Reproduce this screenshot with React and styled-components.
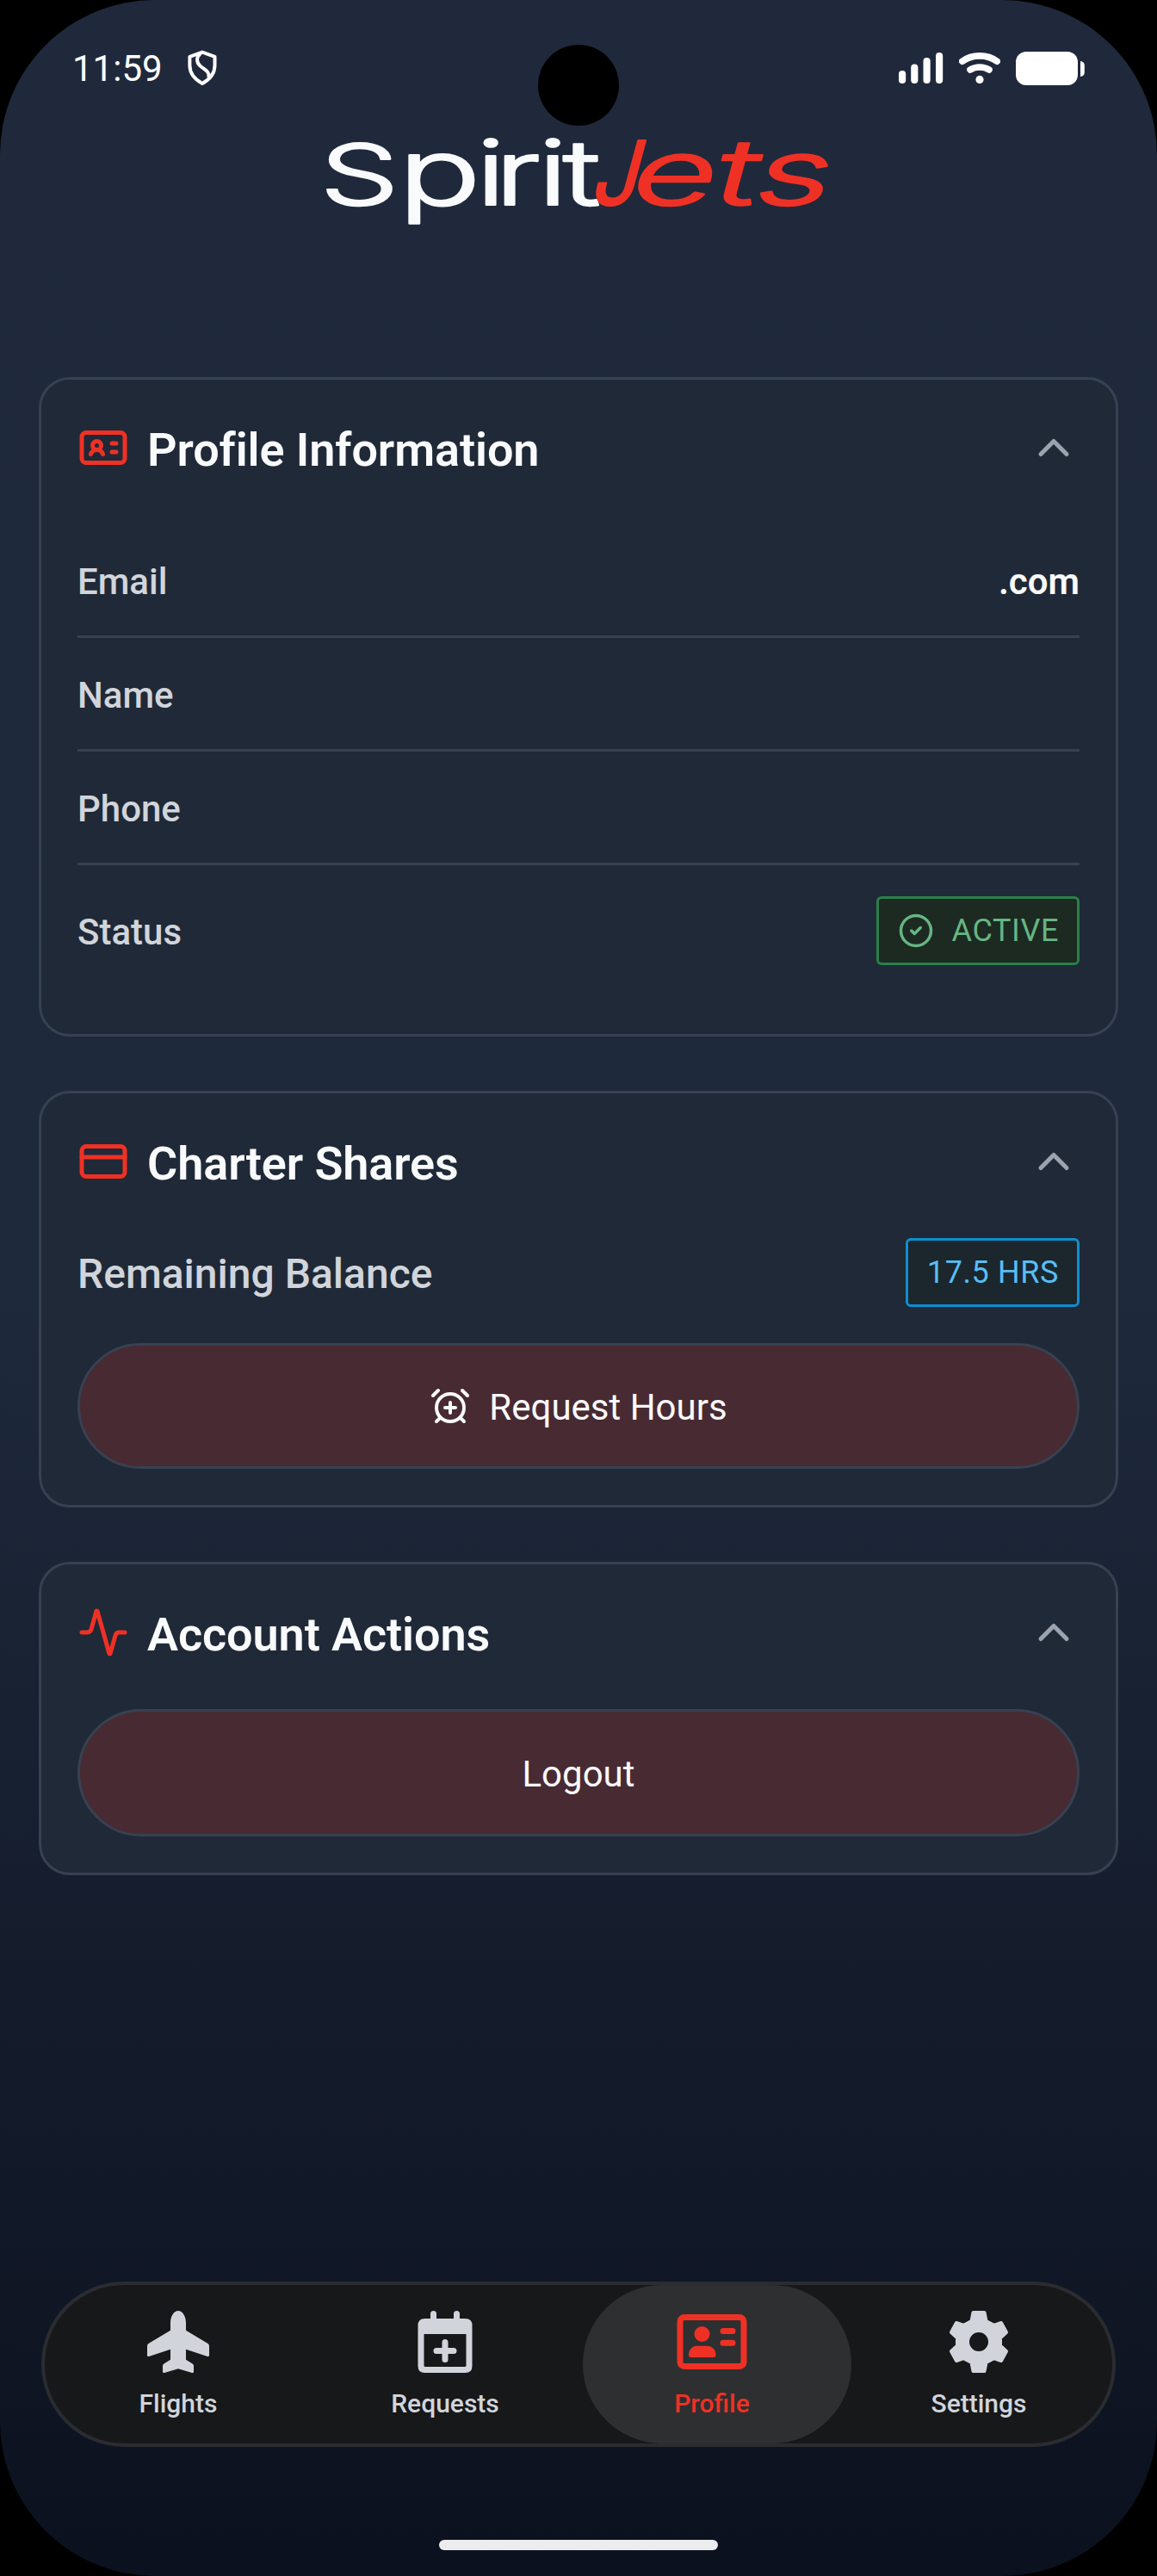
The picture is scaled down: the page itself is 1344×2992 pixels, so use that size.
import React, { useState } from 'react'
import styled, { createGlobalStyle } from 'styled-components'
import { Activity, AlarmClockPlus, ChevronDown, ChevronUp, CircleCheck, CreditCard, IdCard } from 'lucide-react'

const GlobalStyle = createGlobalStyle`
  *{
    box-sizing: border-box;
    padding: 0;
    margin: 0;
  }
  body{
    background: #000;
    font-family: Roboto, sans-serif;
  }
`

const rows = [
  { label: 'Email', value: '.com' },
  { label: 'Name', value: '' },
  { label: 'Phone', value: '' },
]

const ShieldIcon = () => (
  <svg width="34" height="42" viewBox="0 0 34 42" fill="none" stroke="#fff" strokeWidth="4" strokeLinejoin="round" strokeLinecap="round">
    <path d="M17 2.600 L31.500 7.800 V18 C31.500 28 26 34 17 39 C8 34 2.400 28 2.400 18 V7.800 Z" />
    <path d="M14.500 4.500 C10 8.500 10 14 14 18 C18 22.500 25.500 24 24.500 31" />
  </svg>
)

const SignalIcon = () => (
  <svg width="52" height="36" viewBox="0 0 52 36" fill="#fff">
    <rect x="0" y="21" width="8.200" height="15" rx="4" />
    <rect x="14.200" y="13.500" width="8.200" height="22.500" rx="4" />
    <rect x="28.500" y="6" width="8.200" height="30" rx="4" />
    <rect x="43" y="0" width="8.200" height="36" rx="4" />
  </svg>
)

const WifiIcon = () => (
  <svg width="48" height="36" viewBox="0 0 48 36" fill="none" stroke="#fff" strokeWidth="7.600" strokeLinecap="round">
    <path d="M3.800 10.300 C15 1.700 33 1.700 44.200 10.300" />
    <path d="M13 20 C19.500 16 28.500 16 35 20" />
    <circle cx="24" cy="31.400" r="4.600" fill="#fff" stroke="none" />
  </svg>
)

const BatteryIcon = () => (
  <svg width="80" height="39" viewBox="0 0 80 39" fill="#fff">
    <rect width="72" height="39" rx="12" />
    <path d="M75 11 C78 11.500 79.800 13 79.800 16 V24 C79.800 27 78 28.500 75 29 Z" />
  </svg>
)

const FlightIcon = () => (
  <svg width="72" height="72" viewBox="0 0 72 72" fill="currentColor">
    <path d="M36 0 C41.500 0 45 7 45 14 V22.700 L70.500 38 Q72 39 72 41 V51.500 Q72 53.500 70 52.900 L45 44.700 V56.700 L53 61.800 Q54 62.500 54 64 V70.500 Q54 72.500 52 71.900 L36 67.300 L20 71.900 Q18 72.500 18 70.500 V64 Q18 62.500 19 61.800 L27 56.700 V44.700 L2 52.900 Q0 53.500 0 51.500 V41 Q0 39 1.500 38 L27 22.700 V14 C27 7 30.500 0 36 0 Z" />
  </svg>
)

const RequestIcon = () => (
  <svg width="72" height="72" viewBox="0 0 72 72" fill="currentColor">
    <rect x="19" y="0" width="7" height="18" rx="3.500" />
    <rect x="46" y="0" width="7" height="18" rx="3.500" />
    <path fillRule="evenodd" d="M12.500 9 H59.500 Q67.500 9 67.500 17 V64 Q67.500 72 59.500 72 H12.500 Q4.500 72 4.500 64 V17 Q4.500 9 12.500 9 Z M11.500 27 V63.500 Q11.500 65 13 65 H59 Q60.500 65 60.500 63.500 V27 Z" />
    <path d="M36 36.500 V56.500 M26 46.400 H46" fill="none" stroke="currentColor" strokeWidth="7" strokeLinecap="round" />
  </svg>
)

const ProfileIcon = () => (
  <svg width="82" height="72" viewBox="0 0 82 72" fill="currentColor">
    <rect x="4" y="7.500" width="74" height="57" rx="5" fill="none" stroke="currentColor" strokeWidth="7" />
    <circle cx="29.500" cy="27" r="9" />
    <path d="M14 51 C14 45 18 40.700 24 40.700 H35 C41 40.700 45.500 45 45.500 51 Q45.500 54 43 54 H16.500 Q14 54 14 51 Z" />
    <path d="M54 23.500 H65 M54 37.300 H65" fill="none" stroke="currentColor" strokeWidth="7" strokeLinecap="round" />
  </svg>
)

const SettingsIcon = () => (
  <svg width="72" height="72" viewBox="-36 -36 72 72">
    <path
      fill="currentColor"
      stroke="currentColor"
      strokeWidth="4"
      strokeLinejoin="round"
      fillRule="evenodd"
      d="M-6.500 -34 H6.500 L8.500 -24 L17.500 -19.200 L26 -22 L32 -11 L25 -4.500 V4.500 L32 11 L26 22 L17.500 19.200 L8.500 24 L6.500 34 H-6.500 L-8.500 24 L-17.500 19.200 L-26 22 L-32 11 L-25 4.500 V-4.500 L-32 -11 L-26 -22 L-17.500 -19.200 L-8.500 -24 Z M0 -13 A13 13 0 1 0 0 13 A13 13 0 1 0 0 -13 Z"
    />
  </svg>
)

const tabs = [
  { name: 'Flights', Icon: FlightIcon },
  { name: 'Requests', Icon: RequestIcon },
  { name: 'Profile', Icon: ProfileIcon },
  { name: 'Settings', Icon: SettingsIcon },
]

const Wordmark = () => (
  <Logo viewBox="352 120 640 156" aria-label="SpiritJets">
    <g fill="#f8fafc" stroke="#f8fafc">
      <text transform="translate(0 238) scale(1.5 1)" x="247.700 308.500" y="0" fontSize="106">
        <tspan fontSize="97">S</tspan>p
      </text>
      <text transform="translate(0 238) scale(1.4 1)" x="395 410.700 446.400 467" y="0" fontSize="105">irit</text>
    </g>
    <g fill="#ef3125" stroke="#ef3125">
      <text transform="translate(684 238) skewX(-15.2) scale(0.92 1)" fontSize="103" fontWeight="400">J</text>
      <text transform="translate(0 238) skewX(-15.2) scale(1.6 1)" x="454.400 515 544.500" y="0" fontSize="106">ets</text>
    </g>
  </Logo>
)

const Section = ({ icon: Icon, title, children }) => {
  const [open, setOpen] = useState(true)

  return (
    <Card>
      <CardHeader onClick={() => setOpen(!open)}>
        <Icon size={60} color="#ef3125" />
        <h2>{title}</h2>
        {open ? <ChevronUp size={60} color="#9ca3af" /> : <ChevronDown size={60} color="#9ca3af" />}
      </CardHeader>
      {open && children}
    </Card>
  )
}

const App = () => {
  const [active, setActive] = useState('Profile')

  return (
    <Screen>
      <GlobalStyle />
      <Camera />
      <StatusBar>
        <Time>11:59</Time>
        <ShieldIcon />
        <StatusIcons>
          <SignalIcon />
          <WifiIcon />
          <BatteryIcon />
        </StatusIcons>
      </StatusBar>
      <Wordmark />

      <Content>
        <Section icon={IdCard} title="Profile Information">
          {rows.map((row) =>
            <Row key={row.label}>
              <Label>{row.label}</Label>
              <Value>{row.value}</Value>
            </Row>
          )}
          <Row $last>
            <Label>Status</Label>
            <Badge $bg="#1c2a22" $border="#2a8049" $color="#66b584">
              <CircleCheck size={42} />
              ACTIVE
            </Badge>
          </Row>
        </Section>

        <Section icon={CreditCard} title="Charter Shares">
          <Balance>
            <Label $large>Remaining Balance</Label>
            <Badge $bg="#1b272d" $border="#0d8fd2" $color="#57bef6">17.5 HRS</Badge>
          </Balance>
          <ActionButton $height={146}>
            <AlarmClockPlus size={48} />
            <span>Request Hours</span>
          </ActionButton>
        </Section>

        <Section icon={Activity} title="Account Actions">
          <ActionButton $height={148}>
            <span>Logout</span>
          </ActionButton>
        </Section>
      </Content>

      <TabBar>
        {tabs.map(({ name, Icon }) =>
          <Tab key={name} $active={name === active} onClick={() => setActive(name)}>
            <Icon />
            <span>{name}</span>
          </Tab>
        )}
      </TabBar>
      <HomeIndicator />
    </Screen>
  )
}

const Screen = styled.div`
  position: relative;
  width: 1344px;
  height: 2992px;
  display: flex;
  flex-direction: column;
  overflow: hidden;
  border-radius: 180px;
  background: linear-gradient(180deg, #1f293b 0%, #1e293b 50%, #111827 86%, #0b111e 100%);
`

const Camera = styled.div`
  position: absolute;
  top: 52px;
  left: 625px;
  width: 94px;
  height: 94px;
  border-radius: 50%;
  background: #000;
`

const StatusBar = styled.div`
  display: flex;
  align-items: center;
  height: 120px;
  padding: 38px 84px 0 84px;
  color: #fff;

  > svg{
    margin: 0 0 0 29px;
  }
`

const Time = styled.span`
  font-size: 42px;
`

const StatusIcons = styled.div`
  display: flex;
  align-items: center;
  gap: 18px;
  margin-left: auto;
`

const Logo = styled.svg`
  flex: none;
  width: 640px;
  height: 156px;
  margin: 0 auto;
  overflow: visible;
  font-family: Inter, sans-serif;
  font-weight: 300;
  stroke-width: 2.2px;
  stroke-linejoin: round;
`

const Content = styled.main`
  display: flex;
  flex-direction: column;
  gap: 63px;
  padding: 162px 45px 0;
`

const Card = styled.section`
  padding: 42px;
  border: 3px solid #374151;
  border-radius: 36px;
  background: #202937;
`

const CardHeader = styled.header`
  display: flex;
  align-items: center;
  height: 74px;
  margin-bottom: 52px;
  cursor: pointer;

  h2{
    flex: 1;
    padding: 4px 0 0 21px;
    font-size: 54px;
    font-weight: 600;
    letter-spacing: -0.1px;
    color: #f9fafb;
  }
`

const Row = styled.div`
  display: flex;
  align-items: center;
  justify-content: space-between;
  height: ${props => props.$last ? '152px' : '132px'};
  margin-bottom: ${props => props.$last ? '2px' : '0'};
  border-bottom: ${props => props.$last ? 'none' : '3px solid #374151'};
`

const Label = styled.span`
  padding-top: 3px;
  font-size: ${props => props.$large ? '48px' : '42px'};
  font-weight: 500;
  color: #d1d5db;
`

const Value = styled.span`
  padding-top: 3px;
  font-size: 42px;
  font-weight: 600;
  color: #f9fafb;
`

const Badge = styled.div`
  display: flex;
  align-items: center;
  gap: 21px;
  height: 80px;
  padding: 0 21px 0 22px;
  border: 3px solid ${props => props.$border};
  border-radius: 6px;
  background: ${props => props.$bg};
  color: ${props => props.$color};
  font-size: 36px;
  letter-spacing: 0.6px;
`

const Balance = styled.div`
  display: flex;
  align-items: center;
  justify-content: space-between;
  margin-bottom: 42px;
`

const ActionButton = styled.button`
  display: flex;
  align-items: center;
  justify-content: center;
  gap: 21px;
  width: 100%;
  height: ${props => props.$height}px;
  border: 3px solid #374151;
  border-radius: 74px;
  background: #482a32;
  color: #f9fafb;
  font-family: inherit;
  font-size: 42px;
  cursor: pointer;

  span{
    padding-top: 3px;
  }
`

const TabBar = styled.nav`
  display: flex;
  height: 192px;
  margin: auto 48px 0;
  border: 4px solid #2a2c30;
  border-radius: 96px;
  background: #171819;
`

const Tab = styled.button`
  position: relative;
  z-index: 0;
  flex: 1;
  display: flex;
  flex-direction: column;
  align-items: center;
  gap: 18px;
  padding-top: 30px;
  border: none;
  background: transparent;
  color: ${props => props.$active ? '#ef3125' : '#d1d5db'};
  font-family: inherit;
  font-size: 30px;
  font-weight: 500;
  cursor: pointer;

  &::before{
    content: '';
    display: ${props => props.$active ? 'block' : 'none'};
    position: absolute;
    z-index: -1;
    inset: 0 -7px 0 5px;
    border-radius: 92px;
    background: #2e2f30;
  }
`

const HomeIndicator = styled.div`
  flex: none;
  width: 324px;
  height: 12px;
  margin: 108px auto 30px;
  border-radius: 6px;
  background: #ececee;
`

export default App
